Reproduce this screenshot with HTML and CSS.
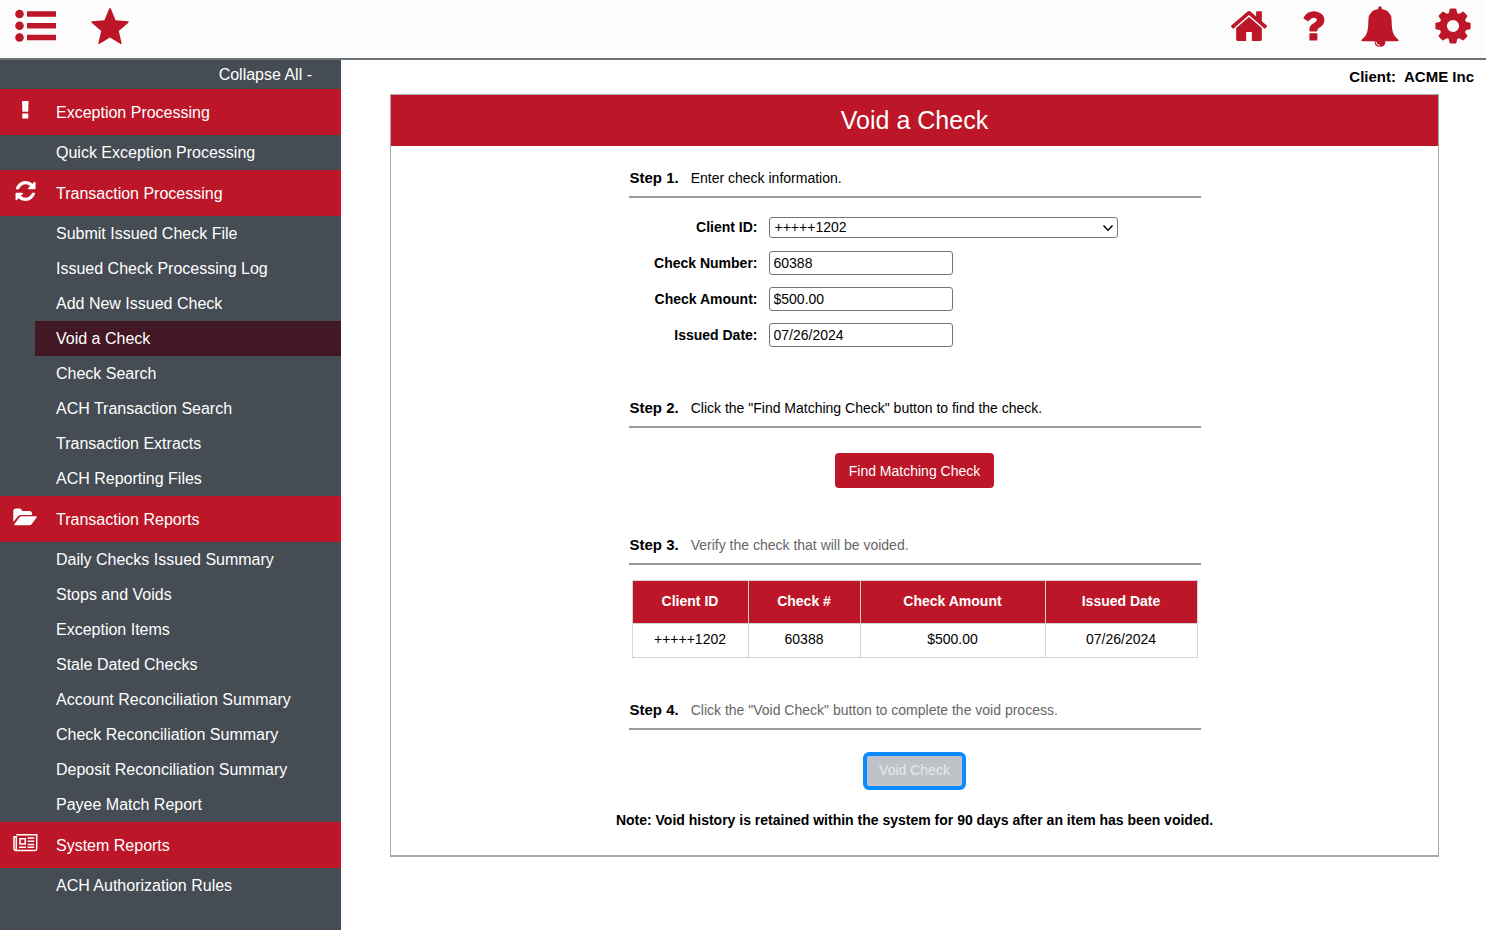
FILE: index.html
```html
<!DOCTYPE html>
<html lang="en">
<head>
<meta charset="utf-8">
<title>Void a Check</title>
<link rel="stylesheet" href="styles.css">
</head>
<body>
<header class="topbar">
  <div class="tools tools-left">
    <button class="icon-btn" type="button" aria-label="Menu">
      <svg width="42" height="34" viewBox="0 0 42 34"><circle cx="4.500" cy="5" r="4.300"/><circle cx="4.500" cy="16.800" r="4.300"/><circle cx="4.500" cy="28.500" r="4.300"/><path d="M12 2.300h29v5.400H12zM12 14.100h29v5.400H12zM12 25.800h29v5.400H12z"/></svg>
    </button>
    <button class="icon-btn" type="button" aria-label="Favorites">
      <svg width="38" height="36" viewBox="0 0 38 36"><path d="M18.100.8q.9-1.600 1.800 0L24.600 12.200l12.100 1.100q1.600.4.400 1.600L27.800 22.900l2.800 12q.1 1.500-1.300.9L19 29.600 8.700 35.800q-1.400.6-1.300-.9l2.800-12L.9 14.900q-1.200-1.200.4-1.600l12.100-1.100z"/></svg>
    </button>
  </div>
  <div class="tools tools-right">
    <button class="icon-btn" type="button" aria-label="Home">
      <svg width="36" height="30" viewBox="89 250 1614 1290" preserveAspectRatio="none"><path d="M1472 992v480q0 26-19 45t-45 19h-384v-384h-256v384h-384q-26 0-45-19t-19-45v-480q0-1 .5-3t.5-3l575-474 575 474q1 2 1 6zm223-69l-62 74q-8 9-21 11h-3q-13 0-21-7l-692-577-692 577q-12 8-24 7-13-2-21-11l-62-74q-8-10-7-23.500t11-21.500l719-599q32-26 76-26t76 26l244 204v-195q0-14 9-23t23-9h192q14 0 23 9t9 23v408l219 182q10 8 11 21.500t-7 23.500z"/></svg>
    </button>
    <button class="icon-btn" type="button" aria-label="Help">
      <svg width="22" height="30" viewBox="0 0 22 30"><path d="M7.200 22.200h6.400q.8 0 .8.800v5.800q0 .8-.8.800H7.200q-.8 0-.8-.8V23q0-.8.800-.8zM.6 6.600Q4.200.3 11 .3q4.200 0 7.300 2.500t3.100 6.300q0 4.700-4.800 7.400-2.200 1.300-2.200 2.500v.6q0 .8-.8.800H7.200q-.8 0-.8-.8v-1.400q0-4 4.600-6.300 2.800-1.300 2.800-2.900 0-2.300-3.200-2.300-2.300 0-4.700 3.100-.6.700-1.300.2L.9 7.800Q.2 7.200.6 6.600z"/></svg>
    </button>
    <button class="icon-btn" type="button" aria-label="Notifications">
      <svg width="38" height="41" viewBox="0 0 38 41"><path d="M17.300 3V2Q17.300.3 19 .3T20.700 2v1Q30.600 4.400 30.600 14q0 11 2.300 14.700 1.500 2.600 4.200 4.800 1.300 1.700-.6 1.700H24.400q0 5.500-5.400 5.500t-5.400-5.500H1.500q-1.900 0-.6-1.700 2.700-2.200 4.200-4.800Q7.400 25 7.400 14 7.400 4.400 17.300 3z"/><path class="shine" d="M14.900 35.700q.3 3.600 4 3.600"/></svg>
    </button>
    <button class="icon-btn" type="button" aria-label="Settings">
      <svg width="36" height="36" viewBox="-18 -18 36 36">
        <circle class="gear-ring" r="9.800"/>
        <path id="teeth" d="M-4.600-11.500L-3.300-17q.1-.6.700-.6h5.200q.6 0 .7.600l1.300 5.500zM-4.600 11.500L-3.300 17q.1.600.7.600h5.200q.6 0 .7-.6l1.300-5.500z"/>
        <use href="#teeth" transform="rotate(45)"/>
        <use href="#teeth" transform="rotate(90)"/>
        <use href="#teeth" transform="rotate(135)"/>
      </svg>
    </button>
  </div>
</header>
<div class="layout">
  <nav class="sidebar">
    <button class="collapse" type="button">Collapse All -</button>
    <h2 class="group">
      <svg class="group-icon" width="26" height="20" viewBox="0 0 26 20"><path d="M10.600 1h5.400q.6 0 .6.600l-.4 9.600q0 .6-.6.600H11q-.6 0-.6-.6L10 1.600q0-.6.600-.6zM10.900 13.500h4.800q.6 0 .6.600v3.900q0 .6-.6.600h-4.800q-.6 0-.6-.6v-3.900q0-.6.600-.6z"/></svg>
      Exception Processing</h2>
    <ul class="items">
      <li><a href="#">Quick Exception Processing</a></li>
    </ul>
    <h2 class="group">
      <svg class="group-icon" width="26" height="20" viewBox="-142 128 1996 1536"><path d="M1639 1056q0 5-1 7-64 268-268 434.500t-478 166.500q-146 0-282.500-55t-243.500-157l-129 129q-19 19-45 19t-45-19-19-45v-448q0-26 19-45t45-19h448q26 0 45 19t19 45-19 45l-137 137q71 66 161 102t187 36q134 0 250-65t186-179q11-17 53-117 8-23 30-23h192q13 0 22.500 9.500t9.500 22.500zm25-800v448q0 26-19 45t-45 19h-448q-26 0-45-19t-19-45 19-45l138-138q-148-137-349-137-134 0-250 65t-186 179q-11 17-53 117-8 23-30 23h-199q-13 0-22.500-9.500t-9.500-22.500v-7q65-268 270-434.500t480-166.500q146 0 284 55.500t245 156.500l130-129q19-19 45-19t45 19 19 45z"/></svg>
      Transaction Processing</h2>
    <ul class="items">
      <li><a href="#">Submit Issued Check File</a></li>
      <li><a href="#">Issued Check Processing Log</a></li>
      <li><a href="#">Add New Issued Check</a></li>
      <li><a href="#" class="active" aria-current="page">Void a Check</a></li>
      <li><a href="#">Check Search</a></li>
      <li><a href="#">ACH Transaction Search</a></li>
      <li><a href="#">Transaction Extracts</a></li>
      <li><a href="#">ACH Reporting Files</a></li>
    </ul>
    <h2 class="group">
      <svg class="group-icon" width="26" height="20" viewBox="0 0 26 20"><path d="M1.300 15V4q0-2.500 2.500-2.500h3.900Q10 1.500 10 4h7.500q2.500 0 2.500 2.500V8H9Q7 8 5.800 9.400zM24 9.200q1.400 0 .6 1.200l-4.800 6.600q-.9 1.200-2.400 1.200H3.100q-1.400 0-.6-1.200l4.800-6.600q.9-1.200 2.400-1.200z"/></svg>
      Transaction Reports</h2>
    <ul class="items">
      <li><a href="#">Daily Checks Issued Summary</a></li>
      <li><a href="#">Stops and Voids</a></li>
      <li><a href="#">Exception Items</a></li>
      <li><a href="#">Stale Dated Checks</a></li>
      <li><a href="#">Account Reconciliation Summary</a></li>
      <li><a href="#">Check Reconciliation Summary</a></li>
      <li><a href="#">Deposit Reconciliation Summary</a></li>
      <li><a href="#">Payee Match Report</a></li>
    </ul>
    <h2 class="group">
      <svg class="group-icon" width="26" height="20" viewBox="0 0 26 20"><path class="line" d="M4.300 1.800h20.400v14q0 1.600-1.600 1.600H3.600Q2 17.400 2 15.800V3.800h2.300M4.300 3v12.500q0 1.900-1.200 1.900M8 5.700h5.200v5.200H8zM15.600 5h6.600M15.600 8.200h6.600M15.600 11.400h6.600M7.200 14.300h6.800M15.600 14.300h6.600"/></svg>
      System Reports</h2>
    <ul class="items">
      <li><a href="#">ACH Authorization Rules</a></li>
    </ul>
  </nav>
  <main class="main">
    <p class="client"><span>Client:</span><span>ACME Inc</span></p>
    <section class="panel">
      <h1 class="panel-title">Void a Check</h1>
      <form class="steps">
        <h2 class="step"><b>Step 1.</b><span>Enter check information.</span></h2>
        <div class="fields">
          <label for="client-id">Client ID:</label>
          <div class="select-wrap">
            <select id="client-id"><option>+++++1202</option></select>
            <svg class="chevron" width="12" height="8" viewBox="0 0 12 8"><path d="M1.500 1.500L6 6.200l4.500-4.700"/></svg>
          </div>
          <label for="number">Check Number:</label>
          <input id="number" type="text" value="60388">
          <label for="amount">Check Amount:</label>
          <input id="amount" type="text" value="$500.00">
          <label for="date">Issued Date:</label>
          <input id="date" type="text" value="07/26/2024">
        </div>
        <h2 class="step"><b>Step 2.</b><span>Click the "Find Matching Check" button to find the check.</span></h2>
        <div class="action action-find"><button class="btn" type="button">Find Matching Check</button></div>
        <h2 class="step step-muted"><b>Step 3.</b><span>Verify the check that will be voided.</span></h2>
        <table class="checks">
          <colgroup><col class="c-id"><col class="c-num"><col class="c-amt"><col class="c-date"></colgroup>
          <thead><tr><th>Client ID</th><th>Check #</th><th>Check Amount</th><th>Issued Date</th></tr></thead>
          <tbody><tr><td>+++++1202</td><td>60388</td><td>$500.00</td><td>07/26/2024</td></tr></tbody>
        </table>
        <h2 class="step step-muted"><b>Step 4.</b><span>Click the "Void Check" button to complete the void process.</span></h2>
        <div class="action action-void"><button class="btn btn-void" type="button">Void Check</button></div>
        <p class="note">Note: Void history is retained within the system for 90 days after an item has been voided.</p>
      </form>
    </section>
  </main>
</div>
</body>
</html>
```
FILE: styles.css
```css
* { box-sizing: border-box; }
body {
  margin: 0;
  min-height: 100vh;
  display: flex;
  flex-direction: column;
  font-family: "Liberation Sans", Arial, sans-serif;
  font-size: 14px;
  color: #000;
  background: #fff;
}
h1, h2, p, ul { margin: 0; padding: 0; font-weight: normal; }
button, input, select { font: inherit; }

.topbar {
  display: flex;
  justify-content: space-between;
  align-items: center;
  height: 60px;
  padding: 0 15px 6px;
  background: #fcfcfc;
  border-bottom: 2px solid #6b737b;
}
.tools { display: flex; align-items: center; }
.tools-left { gap: 34px; }
.tools-right { gap: 36px; }
.icon-btn {
  display: flex;
  padding: 0;
  border: 0;
  background: none;
  fill: #bc1628;
}
.shine { fill: none; stroke: #fff; stroke-width: 1; }
.gear-ring { fill: none; stroke: #bc1628; stroke-width: 7.4; }

.layout { flex: 1; display: flex; }
.sidebar {
  flex: 0 0 341px;
  background: #454c53;
  color: #fff;
  font-size: 16px;
}
.collapse {
  display: block;
  width: 100%;
  height: 29px;
  padding: 0 29px 0 0;
  border: 0;
  background: none;
  color: #fff;
  text-align: right;
}
.group {
  display: flex;
  align-items: center;
  gap: 18px;
  height: 46px;
  padding: 2px 0 0 12px;
  background: #bc1628;
  font-size: 16px;
}
.group-icon { fill: #fff; margin-bottom: 6px; }
.line { fill: none; stroke: #fff; stroke-width: 1.5; }
.items { list-style: none; padding-left: 35px; }
.items a {
  display: block;
  padding-left: 21px;
  line-height: 35px;
  color: #fff;
  text-decoration: none;
}
.items .active { background: #431825; }

.main { flex: 1; padding: 0 47px 24px 49px; }
.client {
  display: flex;
  justify-content: flex-end;
  gap: 8px;
  margin-right: -35px;
  font-size: 15px;
  line-height: 34px;
  font-weight: bold;
}
.client span { font-weight: bold; }
.panel { border: 1px solid #aaa; border-width: 1px 1px 2px; }
.panel-title {
  background: #bc1628;
  color: #fff;
  font-size: 25px;
  line-height: 51px;
  text-align: center;
}
.steps {
  display: flex;
  flex-direction: column;
  max-width: 572px;
  margin: 0 auto;
  padding: 21px 0 24px;
}
.step {
  display: flex;
  gap: 12px;
  padding: 0 1px 7px;
  border-bottom: 2px solid #999;
  font-size: 14px;
  line-height: 22px;
}
.step b { font-size: 15px; }
.step-muted span { color: #666; }
.fields {
  display: grid;
  grid-template-columns: 129px 1fr;
  grid-auto-rows: 24px;
  align-items: center;
  gap: 12px 11px;
  padding: 17px 0 50px;
}
.fields label { font-weight: bold; text-align: right; }
.fields input, .fields select {
  border: 1px solid #767676;
  border-radius: 3px;
  background: #fff;
  color: #000;
}
.fields input { width: 184px; height: 24px; padding: 0 4px; }
.select-wrap { position: relative; width: 349px; height: 21px; }
.fields select {
  display: block;
  width: 100%;
  height: 21px;
  padding: 0 5px;
  appearance: none;
}
.chevron {
  position: absolute;
  right: 4px;
  top: 7px;
  fill: none;
  stroke: #000;
  stroke-width: 1.5;
  pointer-events: none;
}
.action { display: flex; justify-content: center; }
.action-find { padding: 25px 0 46px; }
.action-void { padding: 22px 0 19px; }
.btn {
  height: 35px;
  padding: 0 14px;
  border: 0;
  border-radius: 4px;
  background: #bc1628;
  color: #fff;
}
.btn-void {
  height: 38px;
  padding: 0 12px 2px;
  border: 4px solid #0a8cff;
  border-radius: 6px;
  background: #bfc2c6;
  color: #e6e8ea;
}
.checks {
  align-self: center;
  width: 565px;
  margin: 15px 0 41px;
  border-collapse: collapse;
  table-layout: fixed;
  text-align: center;
}
.checks th, .checks td { padding: 0 0 3px; border: 1px solid #d5d5d5; }
.checks th { height: 43px; background: #bc1628; color: #fff; }
.checks td { height: 34px; }
.c-id { width: 116px; }
.c-num { width: 112px; }
.c-amt { width: 185px; }
.c-date { width: 152px; }
.note {
  align-self: center;
  font-weight: bold;
  line-height: 22px;
  white-space: nowrap;
}
```
